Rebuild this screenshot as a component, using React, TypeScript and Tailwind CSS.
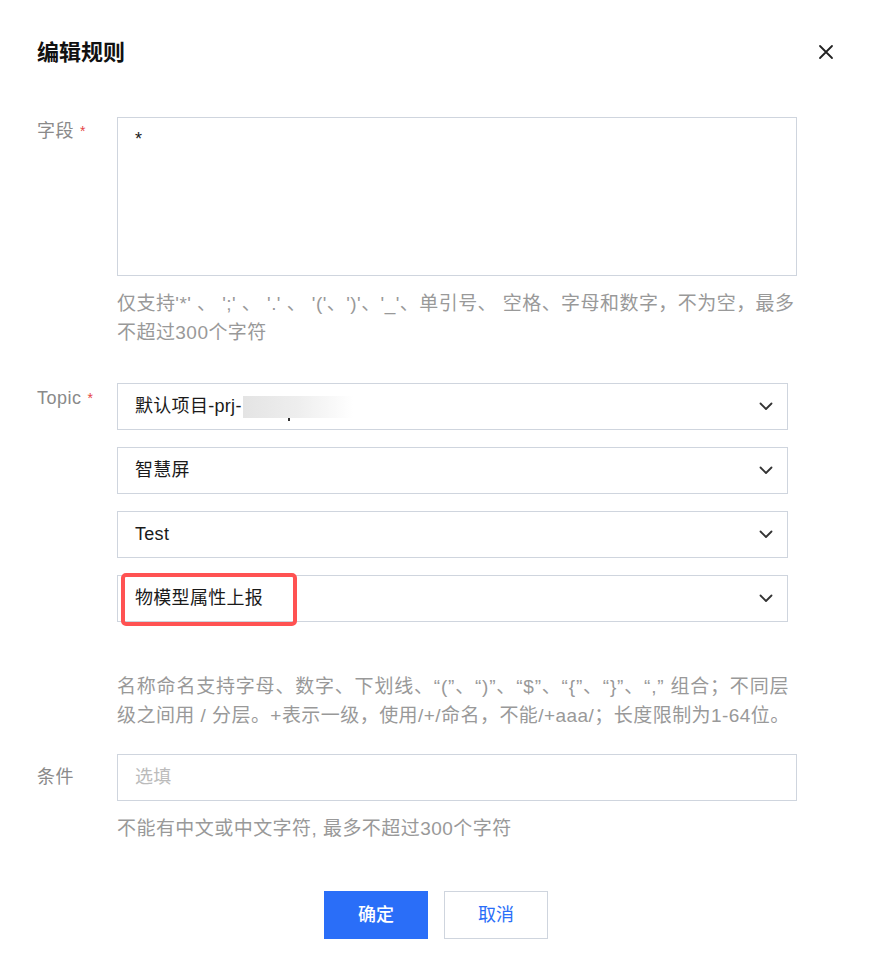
import React from "react";

const font = "font-['Liberation_Sans','Noto_Sans_CJK_SC',sans-serif]";
const help = "whitespace-nowrap text-[19px] tracking-[0.45px] leading-[29px] text-[#999]";

function Chevron() {
  return (
    <svg width="14" height="9" viewBox="0 0 14 9" fill="none" className="shrink-0">
      <polyline points="1.5,1.5 7,7 12.5,1.5" stroke="#333" strokeWidth="1.8" strokeLinecap="round" strokeLinejoin="round" />
    </svg>
  );
}

function Select({ children, highlight }: { children: React.ReactNode; highlight?: boolean }) {
  return (
    <div className="relative flex h-[47px] w-[671px] items-center justify-between border border-[#cfd5de] pl-[17px] pr-[14px] text-[18px] tracking-[0.3px] text-[#1a1a1a]">
      <div className="flex items-center">{children}</div>
      <Chevron />
      {highlight && (
        <div className="absolute left-[3px] -top-[3px] h-[53px] w-[176px] rounded-[5px] border-4 border-[#ff5252]" />
      )}
    </div>
  );
}

function Label({ text, required, className = "" }: { text: string; required?: boolean; className?: string }) {
  return (
    <div className={`flex w-[80px] shrink-0 items-start text-[18px] tracking-[0.5px] leading-[29px] text-[#8a8a8a] ${className}`}>
      <span>{text}</span>
      {required && <span className="ml-[6px] text-[14px] text-[#e54545]">*</span>}
    </div>
  );
}

export default function App() {
  return (
    <div className={`relative h-[964px] w-[874px] bg-white ${font}`}>
      <div className="flex h-[30px] items-center justify-between pl-[37px] pr-[40px] mt-[37px]">
        <div className="text-[22px] font-bold text-[#111]">编辑规则</div>
        <svg width="16" height="16" viewBox="0 0 16 16" fill="none">
          <path d="M2 2 L14 14 M14 2 L2 14" stroke="#222" strokeWidth="1.8" strokeLinecap="round" />
        </svg>
      </div>

      <div className="mt-[50px] pl-[37px]">
        <div className="flex">
          <Label text="字段" required />
          <div className="flex flex-col">
            <div className="h-[159px] w-[680px] border border-[#cfd5de] px-[17px] pt-[7px] text-[18px] leading-[29px] text-[#1a1a1a]">
              *
            </div>
            <div className={`mt-[13px] ${help}`}>
              仅支持'*' 、 ';' 、 '.' 、 '('、')'、'_'、单引号、 空格、字母和数字，不为空，最多
              <br />
              不超过300个字符
            </div>
          </div>
        </div>

        <div className="mt-[36px] flex">
          <Label text="Topic" required className="mt-[1px]" />
          <div className="flex flex-col">
            <div className="flex flex-col gap-[17px]">
              <Select>
                <span>默认项目-prj-</span>
                <span className="relative ml-[1px] inline-block h-[22px] w-[110px] bg-gradient-to-r from-[#e4e4e4] via-[#eeeeee] to-white">
                  <span className="absolute left-[45px] top-[22px] h-[3px] w-[2px] bg-[#333]" />
                </span>
              </Select>
              <Select>智慧屏</Select>
              <Select>Test</Select>
              <Select highlight>物模型属性上报</Select>
            </div>
            <div className={`mt-[50px] ${help}`}>
              <span className="tracking-[0.8px]">
                名称命名支持字母、数字、下划线、“(”、“)”、“$”、“{"{"}”、“{"}"}”、“,” 组合；不同层
              </span>
              <br />
              级之间用 / 分层。+表示一级，使用/+/命名，不能/+aaa/；长度限制为1-64位。
            </div>
          </div>
        </div>

        <div className="mt-[24px] flex">
          <Label text="条件" className="mt-[9px]" />
          <div className="flex flex-col">
            <div className="flex h-[47px] w-[680px] items-center border border-[#cfd5de] px-[17px] text-[18px] tracking-[0.3px] text-[#bbbbbb]">
              选填
            </div>
            <div className={`mt-[13px] ${help}`}>
              不能有中文或中文字符, 最多不超过300个字符
            </div>
          </div>
        </div>
      </div>

      <div className="mt-[48px] flex justify-center gap-[16px] pr-[2px]">
        <div className="flex h-[48px] w-[104px] items-center justify-center bg-[#2a6ef8] text-[18px] font-medium text-white">
          确定
        </div>
        <div className="flex h-[48px] w-[104px] items-center justify-center border border-[#cfd5de] text-[18px] text-[#2a6ef8]">
          取消
        </div>
      </div>
    </div>
  );
}
